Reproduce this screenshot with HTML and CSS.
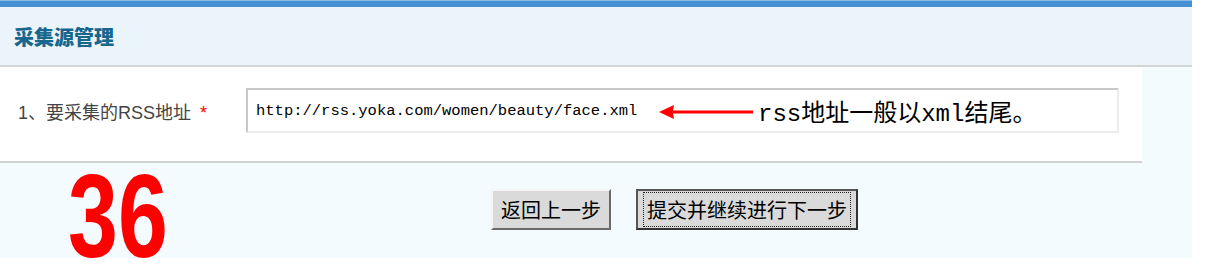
FILE: index.html
```html
<!DOCTYPE HTML>
<html>
<head>
  <meta charset="UTF-8">
  <title>采集源管理</title>
  <link rel="stylesheet" href="styles.css">
</head>
<body>

  <div class="panel">
    <div class="panel-head">
      <h2>采集源管理</h2>
    </div>

    <div class="panel-body">
      <div class="form-row">
        <label class="label">1、要采集的RSS地址 <span class="req">*</span></label>
        <div class="field">
          <span class="url">http://rss.yoka.com/women/beauty/face.xml</span>
          <svg class="arrow" width="96" height="20" viewBox="0 0 96 20">
            <path d="M0 10 L15 3 L14 8.5 L94 8.5 L94 11.5 L14 11.5 L15 17 Z" fill="#f00"/>
          </svg>
          <span class="note">rss地址一般以xml结尾。</span>
        </div>
      </div>

      <div class="actions">
        <div class="big-num">36</div>
        <div class="buttons">
          <button type="button">返回上一步</button>
          <button type="submit" class="focused"><span>提交并继续进行下一步</span></button>
        </div>
      </div>
    </div>
  </div>

</body>
</html>
```

FILE: styles.css
```css
body {
  margin: 0;
  background: #fff;
  font-family: "Liberation Sans", "Noto Sans CJK SC", sans-serif;
}
.panel {
  width: 1192px;
  height: 257px;
  overflow: hidden;
  background: #f3fbff;
  border-top: 1px solid #8dbbe6;
}
.panel-head {
  height: 58px;
  background: #ecf4fb;
  border-top: 6px solid #4690d4;
  border-bottom: 2px solid #d2d4d6;
  display: flex;
  align-items: center;
}
.panel-head h2 {
  margin: 0 0 0 14px;
  font-size: 20px;
  font-family: "Noto Sans CJK SC", sans-serif;
  font-weight: 900;
  color: #17678f;
}
.form-row {
  width: 1142px;
  height: 87px;
  padding-bottom: 7px;
  background: #fff;
  border-bottom: 2px solid #d2d2d2;
  display: flex;
  align-items: center;
}
.label {
  width: 228px;
  padding-left: 18px;
  font-size: 18px;
  color: #444;
}
.req {
  margin-left: 4px;
  color: #f00;
}
.field {
  width: 861px;
  height: 41px;
  border: 2px solid #c8c8c8;
  border-right-color: #ececec;
  border-bottom-color: #ececec;
  background: #fff;
  display: flex;
  align-items: center;
  padding-left: 8px;
}
.url {
  font-family: "Liberation Mono", monospace;
  font-size: 15.5px;
  color: #000;
  width: 403px;
}
.arrow {
  margin-top: 3px;
}
.note {
  margin-left: 3px;
  font-family: "Liberation Mono", "Noto Sans CJK SC", monospace;
  font-size: 24px;
  color: #000;
}
.actions {
  height: 93px;
  display: flex;
  align-items: flex-start;
}
.big-num {
  width: 100px;
  margin: -6px 0 0 68px;
  font-weight: bold;
  font-size: 118px;
  line-height: 1;
  color: #f00;
  transform: scaleX(0.76);
  transform-origin: left top;
  white-space: nowrap;
}
.buttons {
  margin: 26px 0 0 323px;
  display: flex;
  gap: 25px;
}
button {
  height: 41px;
  padding: 0 8px;
  font-family: "Noto Sans CJK SC", sans-serif;
  font-size: 20px;
  color: #000;
  background: #dadada;
  border: 2px solid;
  border-color: #f4f4f4 #6a6a6a #6a6a6a #f4f4f4;
}
button.focused {
  padding: 0 5px;
  border-color: #555 #333 #333 #555;
}
button.focused span {
  display: block;
  padding: 2px 3px;
  border: 1px dotted #222;
}
```
